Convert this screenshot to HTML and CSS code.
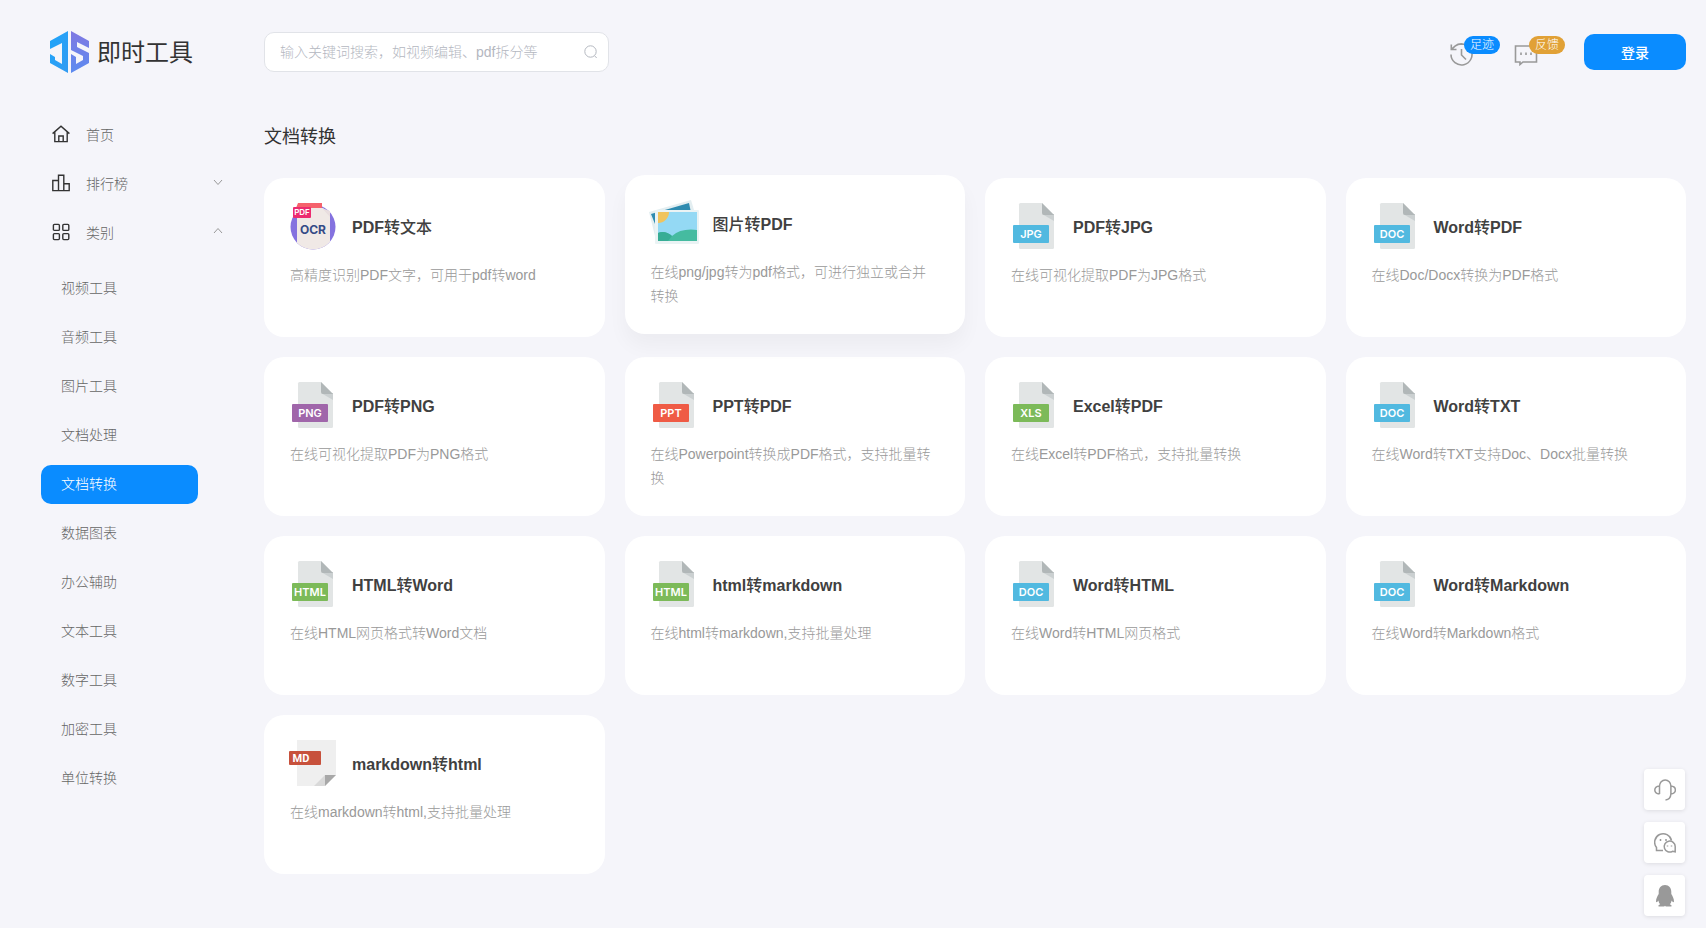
FILE: index.html
```html
<!DOCTYPE html>
<html lang="zh-CN">
<head>
<meta charset="utf-8">
<meta name="viewport" content="width=device-width, initial-scale=1">
<title>即时工具 - 文档转换</title>
<link rel="stylesheet" href="styles.css">
</head>
<body>
<svg class="sprite" aria-hidden="true">
  <symbol id="paper" viewBox="0 0 46 46">
    <path d="M9.500 0H31L43 12V44.500Q43 46 41.500 46H9.500Q8 46 8 44.500V1.500Q8 0 9.500 0Z" fill="#e2e5e5"/>
    <path d="M31 11L43 18V11Z" fill="#cbd0d1"/>
    <path d="M31 0L43 12H33Q31 12 31 10Z" fill="#b1b7b8"/>
    <path d="M8 39V40H36Q38 40 38 38Z" fill="#cdd1d2"/>
  </symbol>
</svg>

<header class="header">
  <a class="brand" href="#">
    <svg class="brand-mark" viewBox="0 0 39 42" aria-hidden="true">
      <defs>
        <linearGradient id="markLeft" x1="0" y1="0" x2="1" y2="1"><stop offset="0" stop-color="#1ea5fa"/><stop offset="1" stop-color="#339bf2"/></linearGradient>
        <linearGradient id="markRight" x1="0" y1="0" x2="0" y2="1"><stop offset="0" stop-color="#8078e2"/><stop offset="1" stop-color="#5c8bf0"/></linearGradient>
      </defs>
      <path d="M18 0V42L0 32V23L5 26V29L12 33V12L0 18V10Z" fill="url(#markLeft)"/>
      <path d="M21 0L39 10V17L27 11V16L39 22V32L21 42V23L26 26V33L33 29V25L21 19Z" fill="url(#markRight)"/>
    </svg>
    <span class="brand-name">即时工具</span>
  </a>
  <form class="search" role="search">
    <input type="text" aria-label="搜索" placeholder="输入关键词搜索，如视频编辑、pdf拆分等">
    <button type="button" aria-label="搜索">
      <svg viewBox="0 0 14 14"><circle cx="6.500" cy="6.500" r="5.700"/><path d="M10.700 10.900L12.700 13"/></svg>
    </button>
  </form>
  <div class="actions">
    <button class="action" type="button">
      <svg viewBox="0 0 24 24"><path d="M2 12.500A10.500 10.500 0 1 0 6 4.200M12.500 7V13L17 17.500M2.300 2.500V7.500H7.500M2.500 7.300L6 4.200Q9 2 12.500 2"/></svg>
      <span class="tag tag-blue">足迹</span>
    </button>
    <button class="action" type="button">
      <svg viewBox="0 0 24 24"><path d="M1.500 4H22.500V20H9L6 22.500V20H1.500Z"/><path d="M7 10.500V13M12 10.500V13M17 10.500V13"/></svg>
      <span class="tag tag-gold">反馈</span>
    </button>
    <button class="login" type="button">登录</button>
  </div>
</header>

<div class="layout">
  <nav class="sidebar" aria-label="主导航">
    <ul class="menu">
      <li><a class="menu-item" href="#">
        <svg class="menu-icon" viewBox="0 0 18 18"><path d="M.6 8.600L9 1.200L17.400 8.600M2.800 7V16.600H15.200V7M6.800 16.400V11H11.200V16.400"/></svg>
        <span>首页</span></a></li>
      <li><a class="menu-item" href="#">
        <svg class="menu-icon" viewBox="0 0 18 18"><path d="M.8 6.500H6.500V16.600H.8ZM6.500 1.200H11.800V16.600H6.500ZM11.800 9.800H17.200V16.600H11.800Z"/></svg>
        <span>排行榜</span>
        <svg class="chevron" viewBox="0 0 10 10"><path d="M1 2L5 6.500L9 2"/></svg></a></li>
      <li><a class="menu-item" href="#">
        <svg class="menu-icon" viewBox="0 0 18 18"><g><rect x="1.400" y="1.400" width="6" height="6" rx="1"/><rect x="10.800" y="1.400" width="6" height="6" rx="1"/><rect x="1.400" y="10.600" width="6" height="6" rx="1"/><rect x="10.800" y="10.600" width="6" height="6" rx="1"/></g></svg>
        <span>类别</span>
        <svg class="chevron" viewBox="0 0 10 10"><path d="M1 6L5 1.500L9 6"/></svg></a></li>
    </ul>
    <ul class="submenu">
      <li><a href="#">视频工具</a></li>
      <li><a href="#">音频工具</a></li>
      <li><a href="#">图片工具</a></li>
      <li><a href="#">文档处理</a></li>
      <li><a class="active" href="#" aria-current="page">文档转换</a></li>
      <li><a href="#">数据图表</a></li>
      <li><a href="#">办公辅助</a></li>
      <li><a href="#">文本工具</a></li>
      <li><a href="#">数字工具</a></li>
      <li><a href="#">加密工具</a></li>
      <li><a href="#">单位转换</a></li>
    </ul>
  </nav>

  <main class="main">
    <h1>文档转换</h1>
    <div class="grid">
      <a class="card" href="#">
        <div class="card-head">
          <svg class="file" viewBox="0 0 46 46" aria-hidden="true">
            <defs><clipPath id="disc"><circle cx="23" cy="24" r="22.500"/></clipPath></defs>
            <g clip-path="url(#disc)"><rect width="46" height="47" fill="#8472df"/><path d="M7 5H33L40 13V47H7Z" fill="#f0e9e6"/></g>
            <path d="M8 0H32V5H6Z" fill="#f5626c"/><path d="M32 5L40 14V8Z" fill="#e9dedf"/>
            <rect x="3" y="4" width="18" height="11" rx="1" fill="#ec2b70"/>
            <text class="ocr-tag" x="12" y="12">PDF</text><text class="ocr" x="23" y="31">OCR</text>
          </svg>
          <h2><b>PDF</b>转文本</h2>
        </div>
        <p>高精度识别PDF文字，可用于pdf转word</p>
      </a>
      <a class="card raised" href="#">
        <div class="card-head">
          <svg class="file" viewBox="0 0 46 46" aria-hidden="true">
            <path d="M-2 12L40 0L46 20L5 40Z" fill="#e3eef1"/><path d="M0 14L38 3L42 22L8 34Z" fill="#2e8bb0"/>
            <rect x="4" y="10" width="44" height="34" rx="1" fill="#eaf3f4"/><rect x="7" y="12" width="39" height="29" fill="#94d9f4"/>
            <path d="M7 12H18A11 11 0 0 1 7 23Z" fill="#f0c45c"/>
            <path d="M7 33Q14 30 21 36Q30 28 46 30V41H7Z" fill="#45bba0"/><path d="M7 33Q14 30 21 36L17 41H7Z" fill="#37ad95"/>
          </svg>
          <h2>图片转<b>PDF</b></h2>
        </div>
        <p>在线png/jpg转为pdf格式，可进行独立或合并转换</p>
      </a>
      <a class="card" href="#">
        <div class="card-head"><svg class="file" viewBox="0 0 46 46" aria-hidden="true"><use href="#paper"/><rect class="blue" x="2" y="22" width="36" height="18" rx="1"/><text x="20" y="35">JPG</text></svg><h2><b>PDF</b>转<b>JPG</b></h2></div>
        <p>在线可视化提取PDF为JPG格式</p>
      </a>
      <a class="card" href="#">
        <div class="card-head"><svg class="file" viewBox="0 0 46 46" aria-hidden="true"><use href="#paper"/><rect class="blue" x="2" y="22" width="36" height="18" rx="1"/><text x="20" y="35">DOC</text></svg><h2><b>Word</b>转<b>PDF</b></h2></div>
        <p>在线Doc/Docx转换为PDF格式</p>
      </a>
      <a class="card" href="#">
        <div class="card-head"><svg class="file" viewBox="0 0 46 46" aria-hidden="true"><use href="#paper"/><rect class="purple" x="2" y="22" width="36" height="18" rx="1"/><text x="20" y="35">PNG</text></svg><h2><b>PDF</b>转<b>PNG</b></h2></div>
        <p>在线可视化提取PDF为PNG格式</p>
      </a>
      <a class="card" href="#">
        <div class="card-head"><svg class="file" viewBox="0 0 46 46" aria-hidden="true"><use href="#paper"/><rect class="red" x="2" y="22" width="36" height="18" rx="1"/><text x="20" y="35">PPT</text></svg><h2><b>PPT</b>转<b>PDF</b></h2></div>
        <p>在线Powerpoint转换成PDF格式，支持批量转换</p>
      </a>
      <a class="card" href="#">
        <div class="card-head"><svg class="file" viewBox="0 0 46 46" aria-hidden="true"><use href="#paper"/><rect class="green" x="2" y="22" width="36" height="18" rx="1"/><text x="20" y="35">XLS</text></svg><h2><b>Excel</b>转<b>PDF</b></h2></div>
        <p>在线Excel转PDF格式，支持批量转换</p>
      </a>
      <a class="card" href="#">
        <div class="card-head"><svg class="file" viewBox="0 0 46 46" aria-hidden="true"><use href="#paper"/><rect class="blue" x="2" y="22" width="36" height="18" rx="1"/><text x="20" y="35">DOC</text></svg><h2><b>Word</b>转<b>TXT</b></h2></div>
        <p>在线Word转TXT支持Doc、Docx批量转换</p>
      </a>
      <a class="card" href="#">
        <div class="card-head"><svg class="file" viewBox="0 0 46 46" aria-hidden="true"><use href="#paper"/><rect class="green" x="2" y="22" width="36" height="18" rx="1"/><text x="20" y="35">HTML</text></svg><h2><b>HTML</b>转<b>Word</b></h2></div>
        <p>在线HTML网页格式转Word文档</p>
      </a>
      <a class="card" href="#">
        <div class="card-head"><svg class="file" viewBox="0 0 46 46" aria-hidden="true"><use href="#paper"/><rect class="green" x="2" y="22" width="36" height="18" rx="1"/><text x="20" y="35">HTML</text></svg><h2><b>html</b>转<b>markdown</b></h2></div>
        <p>在线html转markdown,支持批量处理</p>
      </a>
      <a class="card" href="#">
        <div class="card-head"><svg class="file" viewBox="0 0 46 46" aria-hidden="true"><use href="#paper"/><rect class="blue" x="2" y="22" width="36" height="18" rx="1"/><text x="20" y="35">DOC</text></svg><h2><b>Word</b>转<b>HTML</b></h2></div>
        <p>在线Word转HTML网页格式</p>
      </a>
      <a class="card" href="#">
        <div class="card-head"><svg class="file" viewBox="0 0 46 46" aria-hidden="true"><use href="#paper"/><rect class="blue" x="2" y="22" width="36" height="18" rx="1"/><text x="20" y="35">DOC</text></svg><h2><b>Word</b>转<b>Markdown</b></h2></div>
        <p>在线Word转Markdown格式</p>
      </a>
      <a class="card" href="#">
        <div class="card-head">
          <svg class="file" viewBox="0 0 46 46" aria-hidden="true">
            <path d="M7 0H46V35L35 46H7Z" fill="#efefef"/><path d="M35 35L24 46H35Z" fill="#d9d9d9"/><path d="M35 35H46L35 46Z" fill="#a8a8a8"/>
            <rect x="-1" y="11" width="32" height="14" rx="1" fill="#c7513c"/><text class="md" x="11" y="22">MD</text>
          </svg>
          <h2><b>markdown</b>转<b>html</b></h2>
        </div>
        <p>在线markdown转html,支持批量处理</p>
      </a>
    </div>
  </main>
</div>

<aside class="float-bar" aria-label="联系我们">
  <button type="button" aria-label="客服"><svg viewBox="0 0 22 22"><path d="M5.500 15V7A5.700 6 0 0 1 16.900 7V15Q16.500 20.500 11.500 21M5.500 7Q.8 7.500 .8 11T5.500 15M16.900 7Q21.400 7.500 21.400 11T16.900 15"/></svg></button>
  <button type="button" aria-label="微信"><svg viewBox="0 0 22 22"><path d="M9 18.500H2.500V15.500A8.500 8.500 0 1 1 17.500 8.500"/><path d="M21.200 19.800V14.500A5.500 5.500 0 1 0 18.500 19.300ZM6.500 7V9M12 7V9M13.500 13.500V14.500M17.500 13.500V14.500"/></svg></button>
  <button type="button" aria-label="QQ"><svg class="qq" viewBox="0 0 22 22"><path d="M11 0C7 0 4.700 3 4.700 7V9C3.500 11 2 13.500 2 16.500C2.200 18 3.500 17 4.300 15.500Q4.800 18 6.200 19.200C4.700 19.700 4 20.500 4.600 21.500H10.200L11 20.800L11.800 21.500H17.400C18 20.500 17.300 19.700 15.800 19.200Q17.200 18 17.700 15.500C18.500 17 19.800 18 20 16.500C20 13.500 18.500 11 17.300 9V7C17.300 3 15 0 11 0Z"/></svg></button>
</aside>
</body>
</html>
```
FILE: styles.css
```css
* { box-sizing: border-box; }

body {
  margin: 0;
  min-height: 100vh;
  background: #f5f5fa;
  color: #333;
  font-family: "Liberation Sans", "Noto Sans CJK SC", sans-serif;
  font-size: 14px;
  font-weight: 300;
}

a { color: inherit; text-decoration: none; }
ul { list-style: none; margin: 0; padding: 0; }
button, input { font: inherit; }
button { border: 0; cursor: pointer; }
.sprite { display: none; }

/* Header */
.header {
  display: flex;
  align-items: center;
  height: 104px;
  padding: 0 20px 0 50px;
}

.brand {
  display: flex;
  align-items: center;
  gap: 8px;
  width: 214px;
}
.brand-mark { width: 39px; height: 42px; }
.brand-name {
  padding-bottom: 4px;
  font-size: 24px;
  font-weight: 400;
}

.search {
  display: flex;
  align-items: center;
  width: 345px;
  height: 40px;
  padding: 0 10px 0 15px;
  border: 1px solid #e1e3e8;
  border-radius: 10px;
  background: #fff;
}
.search input {
  flex: 1;
  min-width: 0;
  padding: 0;
  border: 0;
  outline: 0;
  background: none;
}
.search input::placeholder { color: #b4b7bf; }
.search button { display: flex; padding: 0; background: none; }
.search svg {
  width: 14px;
  height: 14px;
  fill: none;
  stroke: #b4b8c0;
}

.actions {
  display: flex;
  align-items: center;
  margin-left: auto;
}
.action {
  position: relative;
  width: 65px;
  height: 24px;
  padding: 0;
  background: none;
  text-align: left;
}
.action svg {
  display: block;
  width: 24px;
  height: 24px;
  margin-top: 2px;
  fill: none;
  stroke: #999;
  stroke-width: 1.6;
}
.tag {
  position: absolute;
  top: -4px;
  left: 15px;
  padding: 0 6px;
  border-radius: 9px;
  color: #fff;
  font-size: 12px;
  line-height: 18px;
}
.tag-blue { background: #0a8cff; }
.tag-gold { background: #e1a136; }
.login {
  width: 102px;
  height: 36px;
  margin-left: 5px;
  border-radius: 10px;
  background: #0a8cff;
  color: #fff;
  font-weight: 500;
}

/* Sidebar */
.layout { display: flex; }
.sidebar {
  flex: none;
  width: 264px;
  padding: 5px 0 0 41px;
}
.menu-item {
  display: flex;
  align-items: center;
  gap: 16px;
  height: 49px;
  padding: 0 41px 0 11px;
  color: #666;
}
.menu-icon {
  width: 18px;
  height: 18px;
  fill: none;
  stroke: #333;
  stroke-width: 1.4;
}
.chevron {
  width: 10px;
  height: 10px;
  margin-left: auto;
  overflow: visible;
  fill: none;
  stroke: #999;
}
.submenu {
  display: grid;
  gap: 10px;
  width: 157px;
  margin-top: 13px;
}
.submenu a {
  display: block;
  padding: 0 20px;
  border-radius: 10px;
  color: #666;
  line-height: 39px;
}
.submenu .active { background: #0a8cff; color: #fff; }

/* Tool cards */
.main {
  flex: 1;
  min-width: 0;
  padding: 19px 20px 40px 0;
}
h1 {
  margin: 0 0 27px;
  font-size: 18px;
  font-weight: 400;
  line-height: 28px;
}
.grid {
  display: grid;
  grid-template-columns: repeat(4, 1fr);
  gap: 20px;
}
.card {
  min-height: 159px;
  padding: 25px 28px 25px 26px;
  border-radius: 20px;
  background: #fff;
}
.raised {
  box-shadow: 0 12px 20px rgba(0, 0, 0, 0.04);
  transform: translateY(-3px);
}
.card-head {
  display: flex;
  align-items: center;
  gap: 16px;
}
.card h2 {
  margin: 0;
  color: #404040;
  font-size: 16px;
  font-weight: 500;
}
.card h2 b { font-weight: 700; }
.card p {
  margin: 14px 0 0;
  color: #999;
  line-height: 24px;
}
.file {
  flex: none;
  width: 46px;
  height: 46px;
  overflow: visible;
}
.file text {
  fill: #fff;
  font-family: Inter, sans-serif;
  font-size: 11px;
  font-weight: 600;
  text-anchor: middle;
}
.file .ocr-tag { font-size: 8px; }
.file .ocr { fill: #344b86; font-size: 12px; font-weight: 700; }
.file .md { font-family: Roboto, sans-serif; font-weight: 700; }
.blue { fill: #51b9e0; }
.purple { fill: #a066aa; }
.red { fill: #ef5b45; }
.green { fill: #7cba59; }

/* Floating contact buttons */
.float-bar {
  position: fixed;
  right: 21px;
  bottom: 12px;
  display: grid;
  gap: 12px;
}
.float-bar button {
  display: grid;
  place-items: center;
  width: 41px;
  height: 41px;
  padding: 0;
  border-radius: 4px;
  background: #fff;
  box-shadow: 0 1px 4px rgba(0, 0, 0, 0.1);
}
.float-bar svg {
  width: 22px;
  height: 22px;
  fill: none;
  stroke: #999;
  stroke-width: 1.5;
}
.float-bar .qq { fill: #999; stroke: none; }
```
